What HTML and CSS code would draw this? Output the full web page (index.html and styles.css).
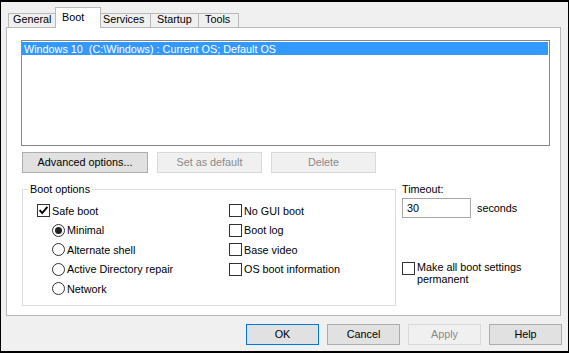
FILE: index.html
```html
<!DOCTYPE html>
<html>
<head>
<meta charset="utf-8">
<link rel="stylesheet" href="styles.css">
</head>
<body>
<div class="window">
  <div class="tabs">
    <div class="tab tab-general">General</div>
    <div class="tab tab-boot tab-selected">Boot</div>
    <div class="tab tab-services">Services</div>
    <div class="tab tab-startup">Startup</div>
    <div class="tab tab-tools">Tools</div>
  </div>
  <div class="panel">
    <div class="listbox">
      <div class="list-item">Windows 10&nbsp; (C:\Windows) : Current OS; Default OS</div>
    </div>
    <div class="btn-row">
      <button class="btn btn-adv">Advanced options...</button>
      <button class="btn btn-mid" disabled>Set as default</button>
      <button class="btn btn-mid" disabled>Delete</button>
    </div>
    <div class="options">
      <fieldset class="group">
        <legend>Boot options</legend>
        <div class="group-body">
          <div class="col col-left">
            <div class="row"><span class="cb"><svg width="11" height="11" viewBox="0 0 11 11"><polyline points="1.6,5.2 4.2,8 9.4,1.8" fill="none" stroke="#000" stroke-width="1.9"/></svg></span><span>Safe boot</span></div>
            <div class="row indent"><span class="radio"><span class="dot"></span></span><span>Minimal</span></div>
            <div class="row indent"><span class="radio"></span><span>Alternate shell</span></div>
            <div class="row indent"><span class="radio"></span><span>Active Directory repair</span></div>
            <div class="row indent"><span class="radio"></span><span>Network</span></div>
          </div>
          <div class="col col-right">
            <div class="row"><span class="cb"></span><span>No GUI boot</span></div>
            <div class="row"><span class="cb"></span><span>Boot log</span></div>
            <div class="row"><span class="cb"></span><span>Base video</span></div>
            <div class="row"><span class="cb"></span><span>OS boot information</span></div>
          </div>
        </div>
      </fieldset>
      <div class="timeout">
        <div class="timeout-label">Timeout:</div>
        <div class="timeout-row"><div class="input">30</div><span class="unit">seconds</span></div>
        <div class="perm"><span class="cb"></span><span class="perm-text">Make all boot settings<br>permanent</span></div>
      </div>
    </div>
  </div>
  <div class="footer">
    <button class="btn btn-foot btn-default">OK</button>
    <button class="btn btn-foot">Cancel</button>
    <button class="btn btn-foot" disabled>Apply</button>
    <button class="btn btn-foot">Help</button>
  </div>
</div>
</body>
</html>
```
FILE: styles.css
```css
* { box-sizing: border-box; }
html, body { margin: 0; padding: 0; background: #fff; }
body {
  font-family: "Liberation Sans", Arial, sans-serif;
  font-size: 10.8px;
  color: #000;
}
.window {
  width: 569px;
  height: 353px;
  background: #f0f0f0;
  border-style: solid;
  border-color: #000;
  border-width: 2px 1px 2px 1px;
  display: flex;
  flex-direction: column;
}
.tabs {
  display: flex;
  align-items: flex-end;
  height: 21px;
  margin: 5px 0 -1px 0;
  padding-left: 7px;
}
.tab {
  height: 15px;
  border: 1px solid #b9b9b9;
  border-bottom: none;
  background: #f0f0f0;
  margin-left: -1px;
  line-height: 11px;
  white-space: nowrap;
  padding-left: 6px;
}
.tab-general { margin-left: 0; width: 48px; padding-left: 4px; }
.tab-boot { width: 46px; }
.tab-services { width: 51px; padding-left: 2px; }
.tab-startup { width: 49px; }
.tab-tools { width: 41px; }
.tab-selected {
  height: 21px;
  background: #fff;
  position: relative;
  z-index: 1;
  padding-top: 4px;
}
.panel {
  width: 555px;
  height: 289px;
  margin-left: 5px;
  border: 1px solid #b9b9b9;
  background: #fff;
  padding: 12px 0 0 14px;
}
.listbox {
  width: 529px;
  height: 106px;
  border: 1px solid #828790;
  padding: 1px 1px 0 0;
}
.list-item {
  height: 13px;
  line-height: 15px;
  background: #3399ff;
  color: #fff;
  padding-left: 2px;
  white-space: pre;
}
.btn {
  font-family: inherit;
  font-size: inherit;
  color: #000;
  height: 21px;
  padding: 0;
  margin: 0;
  border: 1px solid #adadad;
  background: #e1e1e1;
  border-radius: 0;
  line-height: 13px;
  white-space: nowrap;
}
.btn[disabled] {
  background: #f0f0f0;
  border-color: #d9d9d9;
  color: #8a8a8a;
}
.btn-row {
  display: flex;
  gap: 9px;
  margin: 6px 0 0 1px;
}
.btn-adv { width: 126px; }
.btn-mid { width: 105px; }
.options {
  display: flex;
  margin: 10px 0 0 1px;
}
.group {
  margin: 0;
  padding: 0;
  border: 1px solid #dcdcdc;
  width: 374px;
  min-width: 0;
}
.group legend {
  margin-left: 5px;
  padding: 0 2px;
  line-height: 13px;
}
.group-body {
  display: flex;
  padding: 5px 0 7px 14px;
}
.col {
  display: grid;
  grid-template-rows: 19px 20px 19px 20px 19px;
  align-content: start;
}
.col-left { width: 192px; }
.row {
  display: flex;
  align-items: center;
  gap: 2px;
  white-space: nowrap;
}
.indent { padding-left: 15px; }
.cb {
  width: 13px;
  height: 13px;
  flex: none;
  border: 1px solid #333;
  background: #fff;
  display: flex;
  align-items: center;
  justify-content: center;
}
.cb svg { display: block; }
.radio {
  width: 13px;
  height: 13px;
  flex: none;
  border: 1px solid #333;
  border-radius: 50%;
  background: #fff;
  display: flex;
  align-items: center;
  justify-content: center;
}
.dot {
  width: 7px;
  height: 7px;
  border-radius: 50%;
  background: #222;
}
.timeout {
  margin-left: 6px;
  display: flex;
  flex-direction: column;
}
.timeout-label { line-height: 13px; }
.timeout-row {
  display: flex;
  align-items: center;
  gap: 6px;
  margin-top: 2px;
}
.input {
  width: 69px;
  height: 20px;
  border: 1px solid #a6a6a6;
  background: #fff;
  padding-left: 4px;
  line-height: 18px;
}
.perm {
  display: flex;
  align-items: flex-start;
  gap: 2px;
  margin-top: 43px;
}
.perm .cb { margin-top: 1px; }
.perm-text { line-height: 12px; }
.footer {
  display: flex;
  justify-content: flex-end;
  gap: 8px;
  margin-top: 8px;
  padding-right: 6px;
}
.btn-foot { width: 73px; }
.btn-default { border-color: #0078d7; }
```
